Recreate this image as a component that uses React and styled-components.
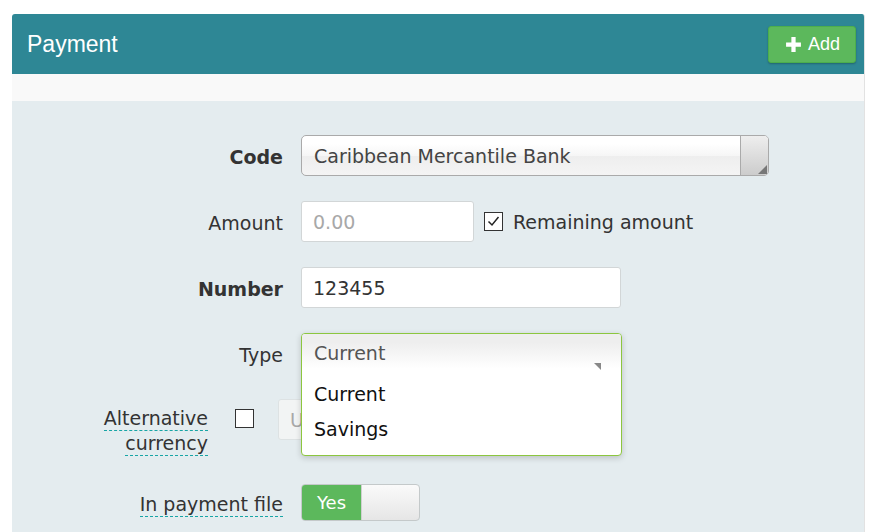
import React from 'react';
import styled, { createGlobalStyle } from 'styled-components';

const GlobalStyle = createGlobalStyle`
  html, body {
    margin: 0;
    padding: 0;
    background: #ffffff;
  }
  body {
    font-family: "DejaVu Sans", Verdana, sans-serif;
    color: #333333;
  }
`;

const Page = styled.div`
  padding: 14px 11px 0 12px;
  height: 532px;
  box-sizing: border-box;
  overflow: hidden;
`;

const Panel = styled.div`
  border-right: 1px solid #e2e2e2;
  border-radius: 3px 3px 0 0;
  overflow: hidden;
`;

const Header = styled.div`
  display: flex;
  align-items: center;
  justify-content: space-between;
  height: 60px;
  padding: 0 8px 0 15px;
  background: #2e8795;
`;

const Title = styled.h3`
  margin: 0;
  font-family: "Liberation Sans", Arial, sans-serif;
  font-weight: normal;
  font-size: 23px;
  color: #ffffff;
`;

const AddButton = styled.button`
  display: flex;
  align-items: center;
  gap: 6px;
  height: 37px;
  padding: 0 15px 0 16px;
  border: 1px solid #4cae4c;
  border-radius: 3px;
  background: #5cb85c;
  color: #ffffff;
  font-family: "Liberation Sans", Arial, sans-serif;
  font-size: 18px;
  box-shadow: 0 1px 2px rgba(0, 0, 0, 0.25);
`;

const Strip = styled.div`
  height: 27px;
  background: #f9f9f9;
`;

const Body = styled.div`
  background: #e4ecef;
  padding: 34px 0 40px;
`;

const Form = styled.div`
  display: grid;
  grid-template-columns: 271px 1fr;
  column-gap: 18px;
  row-gap: 25px;
  align-items: center;
`;

const Label = styled.label`
  justify-self: end;
  padding-top: 3px;
  font-size: 19px;
  font-weight: ${p => (p.$bold ? 'bold' : 'normal')};
  color: #333333;
  line-height: 25px;
`;

const HintLabel = styled(Label)`
  text-align: right;
  span {
    padding-bottom: 1px;
    border-bottom: 1px dashed #17a5a5;
  }
`;

const Control = styled.div`
  display: flex;
  align-items: center;
  gap: 10px;
  position: relative;
`;

const Input = styled.div`
  box-sizing: border-box;
  width: ${p => p.$width}px;
  height: 41px;
  padding: 0 11px;
  display: flex;
  align-items: center;
  background: ${p => (p.$disabled ? '#f2f4f4' : '#ffffff')};
  border: 1px solid ${p => (p.$disabled ? '#dde2e3' : '#d2d6d7')};
  border-radius: 3px;
  font-size: 19px;
  color: ${p => (p.$placeholder ? '#a8a8a8' : '#333333')};
`;

const Select = styled.div`
  box-sizing: border-box;
  width: 468px;
  height: 41px;
  display: flex;
  border: 1px solid #aaaaaa;
  border-radius: 5px;
  background: linear-gradient(#ffffff 20%, #f6f6f6 50%, #eeeeee 52%, #f4f4f4 100%);
  overflow: hidden;
`;

const SelectText = styled.div`
  flex: 1;
  display: flex;
  align-items: center;
  padding: 0 12px;
  font-size: 19px;
  color: #444444;
`;

const SelectHandle = styled.div`
  position: relative;
  width: 27px;
  border-left: 1px solid #aaaaaa;
  background: linear-gradient(#eeeeee, #cccccc);
`;

const Corner = styled.div`
  position: absolute;
  right: 1px;
  bottom: 1px;
  width: 0;
  height: 0;
  border-left: 9px solid transparent;
  border-bottom: 9px solid #777777;
`;

const Check = styled.span`
  box-sizing: border-box;
  width: 19px;
  height: 19px;
  border: 1px solid #333333;
  background: #ffffff;
  display: inline-flex;
  align-items: center;
  justify-content: center;
  flex-shrink: 0;
`;

const CheckText = styled.span`
  font-size: 19px;
  color: #333333;
`;

const Dropdown = styled.div`
  position: absolute;
  left: 0;
  top: 0;
  z-index: 2;
  box-sizing: border-box;
  width: 321px;
  height: 123px;
  background: #ffffff;
  border: 1px solid #8cc63f;
  border-radius: 4px;
  box-shadow: 0 2px 6px rgba(0, 0, 0, 0.18);
  overflow: hidden;
`;

const DropdownHead = styled.div`
  position: relative;
  height: 43px;
  padding: 8px 12px 0;
  box-sizing: border-box;
  background: linear-gradient(#eeeeee 20%, #ffffff 80%);
  font-size: 19px;
  color: #555555;
`;

const HeadArrow = styled.div`
  position: absolute;
  right: 20px;
  top: 29px;
  width: 0;
  height: 0;
  border-left: 7px solid transparent;
  border-top: 7px solid #888888;
`;

const Option = styled.div`
  height: 35px;
  line-height: 35px;
  padding: 0 12px;
  font-size: 19px;
  color: #111111;
`;

const AltRow = styled.div`
  grid-column: 1 / -1;
  display: flex;
  align-items: flex-start;
  height: 60px;
`;

const AltLabel = styled(HintLabel)`
  width: 196px;
  padding-top: 7px;
`;

const AltCheck = styled(Check)`
  margin: 10px 24px 0 27px;
`;

const Toggle = styled.div`
  box-sizing: border-box;
  width: 119px;
  height: 37px;
  display: flex;
  border: 1px solid #c4c9ca;
  border-radius: 4px;
  overflow: hidden;
  background: linear-gradient(#fafafa, #e6e6e6);
`;

const ToggleOn = styled.div`
  width: 59px;
  display: flex;
  align-items: center;
  justify-content: center;
  background: #5cb85c;
  color: #ffffff;
  font-size: 18px;
`;

const ToggleKnob = styled.div`
  flex: 1;
  border-left: 1px solid #d0d0d0;
`;

const PlusIcon = () => (
  <svg width="17" height="17" viewBox="0 0 16 16">
    <path d="M6 1h4v5h5v4h-5v5H6v-5H1V6h5z" fill="#ffffff" />
  </svg>
);

const CheckIcon = () => (
  <svg width="15" height="15" viewBox="0 0 15 15">
    <path d="M2.5 7.5l3.5 3.5 6.5-8" fill="none" stroke="#222222" strokeWidth="1.5" />
  </svg>
);

function App() {
  return (
    <Page>
      <GlobalStyle />
      <Panel>
        <Header>
          <Title>Payment</Title>
          <AddButton>
            <PlusIcon />
            Add
          </AddButton>
        </Header>
        <Strip />
        <Body>
          <Form>
            <Label $bold>Code</Label>
            <Control>
              <Select>
                <SelectText>Caribbean Mercantile Bank</SelectText>
                <SelectHandle>
                  <Corner />
                </SelectHandle>
              </Select>
            </Control>

            <Label>Amount</Label>
            <Control>
              <Input $width={173} $placeholder>0.00</Input>
              <Check>
                <CheckIcon />
              </Check>
              <CheckText>Remaining amount</CheckText>
            </Control>

            <Label $bold>Number</Label>
            <Control>
              <Input $width={320}>123455</Input>
            </Control>

            <Label>Type</Label>
            <Control style={{ height: 41 }}>
              <Dropdown>
                <DropdownHead>
                  Current
                  <HeadArrow />
                </DropdownHead>
                <Option>Current</Option>
                <Option>Savings</Option>
              </Dropdown>
            </Control>

            <AltRow>
              <AltLabel>
                <span>Alternative</span>
                <br />
                <span>currency</span>
              </AltLabel>
              <AltCheck />
              <Input $width={170} $disabled $placeholder>USD</Input>
            </AltRow>

            <HintLabel>
              <span>In payment file</span>
            </HintLabel>
            <Control>
              <Toggle>
                <ToggleOn>Yes</ToggleOn>
                <ToggleKnob />
              </Toggle>
            </Control>
          </Form>
        </Body>
      </Panel>
    </Page>
  );
}

export default App;
